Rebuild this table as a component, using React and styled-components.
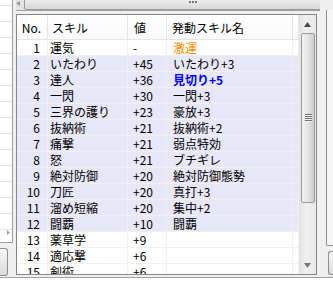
import React from 'react';
import styled, { createGlobalStyle } from 'styled-components';

const GlobalStyle = createGlobalStyle`
  html, body {
    margin: 0;
    padding: 0;
    background: #f0f0f0;
    overflow: hidden;
  }
  body {
    font-family: "Noto Sans CJK JP", "DejaVu Sans", sans-serif;
    font-size: 12px;
    color: #000;
  }
`;

const Frame = styled.div`
  width: 333px;
  height: 281px;
  display: flex;
  flex-direction: column;
  background: #f0f0f0;
  overflow: hidden;
`;

const Body = styled.div`
  display: flex;
  height: 277px;
`;

const BottomRule = styled.div`
  height: 3px;
  border-top: 1px solid #a0a0a0;
  background: #fff;
`;

/* left neighbour pane, mostly cut off */
const LeftPane = styled.div`
  width: 13px;
  display: flex;
  flex-direction: column;
`;

const LeftGrid = styled.div`
  height: 242px;
  background: repeating-linear-gradient(
      to bottom,
      #fff 0,
      #fff 15px,
      #e4e4e4 15px,
      #e4e4e4 16px
    )
    0 6px / 100% 16px;
  background-color: #fff;
  border-right: 1px solid #a0a0a0;
  border-bottom: 1px solid #a0a0a0;
  position: relative;
`;

const LeftArrow = styled.svg`
  position: absolute;
  right: 2px;
  bottom: 7px;
`;

const LeftButton = styled.div`
  margin-top: 5px;
  width: 7px;
  height: 26px;
  border: 1px solid #8e8f8f;
  border-left: none;
  border-radius: 0 3px 3px 0;
  background: linear-gradient(to bottom, #f6f6f6, #dcdcdc);
`;

const Center = styled.div`
  width: 304px;
  margin-left: 3px;
  display: flex;
  flex-direction: column;
`;

/* bottom edge of the horizontal scrollbar above the list */
const TopScroll = styled.div`
  height: 10px;
  display: flex;
  overflow: hidden;
  background: linear-gradient(to right, #e3e3e3, #ececec);
  border-bottom: 1px solid #a0a0a0;
`;

const HArrow = styled.div`
  width: 17px;
  display: flex;
  align-items: flex-start;
  justify-content: center;
  padding-top: 1px;
`;

const HThumb = styled.div`
  margin-left: 4px;
  flex: 0 0 336px;
  height: 9px;
  border: 1px solid #9a9a9a;
  border-top: none;
  border-radius: 0 0 3px 3px;
  background: linear-gradient(to bottom, #ececec, #d8d8d8);
  display: flex;
  justify-content: center;
  align-items: flex-start;
`;

const Grip = styled.div`
  margin-top: 1px;
  width: 8px;
  height: 2px;
  background: repeating-linear-gradient(
    to right,
    #7a7a7a 0,
    #7a7a7a 2px,
    transparent 2px,
    transparent 3px
  );
`;

const ListView = styled.div`
  margin-top: 3px;
  width: 301px;
  height: 261px;
  box-sizing: border-box;
  border: 1px solid #828790;
  background: #fff;
  display: flex;
`;

const Table = styled.div`
  flex: 1;
  overflow: hidden;
`;

const COLS = '31px 80px 39px 126px 6px';

const HeaderRow = styled.div`
  display: grid;
  grid-template-columns: ${COLS};
  height: 24px;
  border-bottom: 1px solid #e5e5e5;
  background: linear-gradient(to bottom, #fff, #fafafa);
`;

const HeaderCell = styled.div`
  display: flex;
  align-items: center;
  justify-content: ${(p) => (p.$right ? 'flex-end' : 'flex-start')};
  padding: ${(p) => (p.$right ? '0 6px 0 0' : `0 0 0 ${p.$pad || 4}px`)};
  border-right: 1px solid #e5e5e5;
  white-space: nowrap;
  overflow: hidden;
`;

const Row = styled.div`
  display: grid;
  grid-template-columns: ${COLS};
  height: 16px;
  background: ${(p) => (p.$marked ? '#e7e7f8' : '#fff')};
`;

const Cell = styled.div`
  box-sizing: border-box;
  height: 16px;
  line-height: 15px;
  padding: ${(p) => (p.$right ? '0 7px 0 0' : `0 0 0 ${p.$pad || 2}px`)};
  text-align: ${(p) => (p.$right ? 'right' : 'left')};
  border-right: 1px solid #f0f0f0;
  border-bottom: 1px solid #f0f0f0;
  white-space: nowrap;
  overflow: hidden;
  color: ${(p) => p.$color || '#000'};
  font-weight: ${(p) => (p.$bold ? 'bold' : 'normal')};
`;

const VScroll = styled.div`
  width: 17px;
  display: flex;
  flex-direction: column;
  background: linear-gradient(to right, #e2e2e2, #f0f0f0 40%, #e8e8e8);
`;

const VArrow = styled.div`
  height: 18px;
  display: flex;
  align-items: center;
  justify-content: center;
`;

const VThumb = styled.div`
  margin: 0 1px 0 2px;
  height: 170px;
  box-sizing: border-box;
  border: 1px solid #9b9b9b;
  border-radius: 2px;
  background: linear-gradient(to right, #f2f2f2, #e6e6e6 45%, #cfcfcf);
  display: flex;
  align-items: center;
  justify-content: center;
`;

const GripLines = styled.div`
  width: 7px;
  height: 8px;
  background: repeating-linear-gradient(
    to bottom,
    #6f6f6f 0,
    #6f6f6f 1px,
    #f4f4f4 1px,
    #f4f4f4 2px
  );
`;

const Track = styled.div`
  flex: 1;
`;

/* right neighbour pane, mostly cut off */
const RightPane = styled.div`
  margin-left: 6px;
  flex: 1;
  display: flex;
  flex-direction: column;
`;

const RightBox = styled.div`
  margin-top: 10px;
  height: 235px;
  border-left: 1px solid #8e8f8f;
  border-bottom: 1px solid #8e8f8f;
  border-radius: 0 0 0 2px;
  background: #f7f7f7;
`;

const RightButton = styled.div`
  margin: 5px 0 0 2px;
  height: 22px;
  border: 1px solid #8e8f8f;
  border-right: none;
  border-radius: 3px 0 0 3px;
  background: linear-gradient(to bottom, #f6f6f6, #dcdcdc);
`;

const Tri = ({ dir, color = '#4a4a4a', size = 7 }) => {
  const h = Math.ceil(size / 2) + 1;
  const points = {
    up: `0,${h} ${size},${h} ${size / 2},0`,
    down: `0,0 ${size},0 ${size / 2},${h}`,
  };
  if (dir === 'left' || dir === 'right') {
    const pts =
      dir === 'left' ? `${h},0 ${h},${size} 0,${size / 2}` : `0,0 0,${size} ${h},${size / 2}`;
    return (
      <svg width={h} height={size} viewBox={`0 0 ${h} ${size}`}>
        <polygon points={pts} fill={color} />
      </svg>
    );
  }
  return (
    <svg width={size} height={h} viewBox={`0 0 ${size} ${h}`}>
      <polygon points={points[dir]} fill={color} />
    </svg>
  );
};

const skills = [
  [1, '運気', '-', '激運', { color: '#ff8c00' }],
  [2, 'いたわり', '+45', 'いたわり+3'],
  [3, '達人', '+36', '見切り+5', { color: '#0000ff', bold: true }],
  [4, '一閃', '+30', '一閃+3'],
  [5, '三界の護り', '+23', '豪放+3'],
  [6, '抜納術', '+21', '抜納術+2'],
  [7, '痛撃', '+21', '弱点特効'],
  [8, '怒', '+21', 'ブチギレ'],
  [9, '絶対防御', '+20', '絶対防御態勢'],
  [10, '刀匠', '+20', '真打+3'],
  [11, '溜め短縮', '+20', '集中+2'],
  [12, '闘覇', '+10', '闘覇'],
  [13, '薬草学', '+9', ''],
  [14, '適応撃', '+6', ''],
  [15, '剣術', '+6', ''],
];

export default function App() {
  return (
    <Frame>
      <GlobalStyle />
      <Body>
        <LeftPane>
          <LeftGrid>
            <LeftArrow width="3" height="5" viewBox="0 0 3 5">
              <polygon points="0,0 0,5 3,2.5" fill="#a0a0a0" />
            </LeftArrow>
          </LeftGrid>
          <LeftButton />
        </LeftPane>
        <Center>
          <TopScroll>
            <HArrow>
              <Tri dir="left" size={5} color="#9a9a9a" />
            </HArrow>
            <HThumb>
              <Grip />
            </HThumb>
          </TopScroll>
          <ListView>
            <Table>
              <HeaderRow>
                <HeaderCell $right>No.</HeaderCell>
                <HeaderCell $pad={4}>スキル</HeaderCell>
                <HeaderCell $pad={6}>値</HeaderCell>
                <HeaderCell $pad={5}>発動スキル名</HeaderCell>
                <HeaderCell />
              </HeaderRow>
              {skills.map(([no, name, value, active, style = {}]) => (
                <Row key={no} $marked={no >= 2 && no <= 12}>
                  <Cell $right>{no}</Cell>
                  <Cell $pad={2}>{name}</Cell>
                  <Cell $pad={5}>{value}</Cell>
                  <Cell $pad={6} $color={style.color} $bold={style.bold}>
                    {active}
                  </Cell>
                  <Cell />
                </Row>
              ))}
            </Table>
            <VScroll>
              <VArrow>
                <Tri dir="up" />
              </VArrow>
              <VThumb>
                <GripLines />
              </VThumb>
              <Track />
              <VArrow>
                <Tri dir="down" color="#7a7a7a" />
              </VArrow>
            </VScroll>
          </ListView>
        </Center>
        <RightPane>
          <RightBox />
          <RightButton />
        </RightPane>
      </Body>
      <BottomRule />
    </Frame>
  );
}
